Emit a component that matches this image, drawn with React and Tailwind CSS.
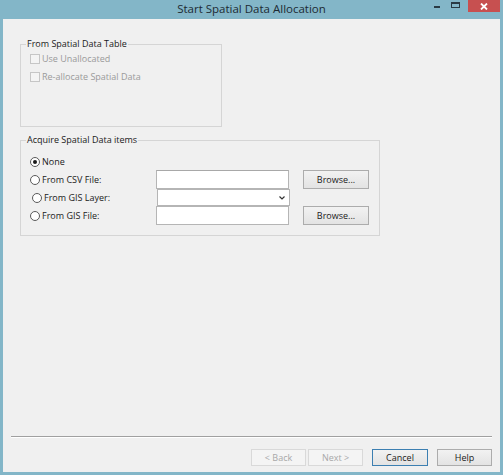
const font = { fontFamily: '"Segoe UI", "Open Sans", sans-serif' };

function Radio({ checked, label, shift }) {
  return (
    <div className={`flex items-center gap-[2px] ${shift ? 'pl-[11px]' : 'pl-[9px]'}`}>
      <span className="w-[10px] h-[10px] rounded-full border border-[#5a5a5a] bg-white flex items-center justify-center">
        {checked && <span className="w-[4px] h-[4px] rounded-full bg-[#1a1a1a]" />}
      </span>
      <span>{label}</span>
    </div>
  );
}

function Check({ label }) {
  return (
    <div className="h-[18px] flex items-center gap-[2px] pl-[9px] text-[#9a9a9a]">
      <span className="w-[10px] h-[10px] border border-[#c6c6c6] bg-[#f4f4f4]" />
      <span>{label}</span>
    </div>
  );
}

function Btn({ children, disabled, primary, className = '' }) {
  let tone = 'border-[#acacac] bg-gradient-to-b from-[#f2f2f2] to-[#e3e3e3] text-[#1a1a1a]';
  if (disabled) tone = 'border-[#d9d9d9] bg-[#f4f4f4] text-[#a8a8a8]';
  if (primary) tone = 'border-[#3c7fb1] bg-gradient-to-b from-[#f2f2f2] to-[#e3e3e3] text-[#1a1a1a]';
  return (
    <div className={`border flex items-center justify-center ${tone} ${className}`}>{children}</div>
  );
}

export default function App() {
  return (
    <div className="w-[503px] h-[475px] bg-[#83b6c8] flex flex-col text-[9px] leading-[12px]" style={font}>
      {/* title bar */}
      <div className="h-[19px] grid grid-cols-[1fr_auto_1fr] items-center">
        <div />
        <div className="text-[11.5px] text-[#1d2a33] -mt-[1px]">Start Spatial Data Allocation</div>
        <div className="flex justify-end items-start h-full">
          <div className="w-[16px] h-[12px] flex items-center justify-center">
            <span className="w-[6px] h-[2px] bg-[#2a3a44] mt-[2px]" />
          </div>
          <div className="w-[16px] h-[12px] ml-[2px] flex items-center justify-center">
            <span className="w-[9px] h-[6px] border border-[#2a3a44] border-t-2 -mt-[2px]" />
          </div>
          <div className="w-[32px] h-[12px] ml-[5px] mr-[3px] bg-[#c75050] flex items-center justify-center">
            <svg width="8" height="7" viewBox="0 0 8 7">
              <path d="M1 0.5 L7 6.5 M7 0.5 L1 6.5" stroke="#fff" strokeWidth="1.8" />
            </svg>
          </div>
        </div>
      </div>

      {/* client area */}
      <div className="flex-1 mx-[3px] mb-[3px] bg-[#f0f0f0] flex flex-col text-[#1a1a1a]">
        <div className="mt-[25px] ml-[17px] w-[202px] h-[83px] border border-[#d5d5d5]">
          <div className="-mt-[7px] ml-[5px] w-fit px-[1px] bg-[#f0f0f0]">From Spatial Data Table</div>
          <Check label="Use Unallocated" />
          <Check label="Re-allocate Spatial Data" />
        </div>

        <div className="mt-[13px] ml-[17px] w-[360px] h-[96px] border border-[#d5d5d5]">
          <div className="-mt-[7px] ml-[5px] w-fit px-[1px] bg-[#f0f0f0]">Acquire Spatial Data items</div>
          <div className="mt-[7px] h-[17px] flex items-center">
            <Radio checked label="None" />
          </div>
          <div className="h-[19px] flex items-stretch">
            <div className="w-[135px] flex items-center"><Radio label="From CSV File:" /></div>
            <div className="w-[133px] border border-[#b5b5b5] border-t-[#a8a8a8] bg-white" />
            <Btn className="ml-[14px] w-[66px]">Browse...</Btn>
          </div>
          <div className="h-[17px] flex items-stretch">
            <div className="w-[136px] flex items-center"><Radio shift label="From GIS Layer:" /></div>
            <div className="w-[133px] border border-[#b5b5b5] bg-white flex items-center justify-end pr-[4px]">
              <svg width="6" height="4" viewBox="0 0 6 4">
                <path d="M0.5 0.5 L3 3 L5.5 0.5" stroke="#333" strokeWidth="1.2" fill="none" />
              </svg>
            </div>
          </div>
          <div className="h-[19px] flex items-stretch">
            <div className="w-[135px] flex items-center"><Radio label="From GIS File:" /></div>
            <div className="w-[133px] border border-[#b5b5b5] bg-white" />
            <Btn className="ml-[14px] w-[66px]">Browse...</Btn>
          </div>
        </div>

        <div className="flex-1" />
        <div className="mx-[8px] h-[1px] bg-[#a0a0a0] border-b border-white box-content" />
        <div className="mt-[11px] mb-[6px] h-[17px] flex justify-end pr-[8px]">
          <Btn disabled className="w-[55px]">&lt; Back</Btn>
          <Btn disabled className="w-[55px] ml-[2px]">Next &gt;</Btn>
          <Btn primary className="w-[56px] ml-[9px]">Cancel</Btn>
          <Btn className="w-[55px] ml-[9px]">Help</Btn>
        </div>
      </div>
    </div>
  );
}
